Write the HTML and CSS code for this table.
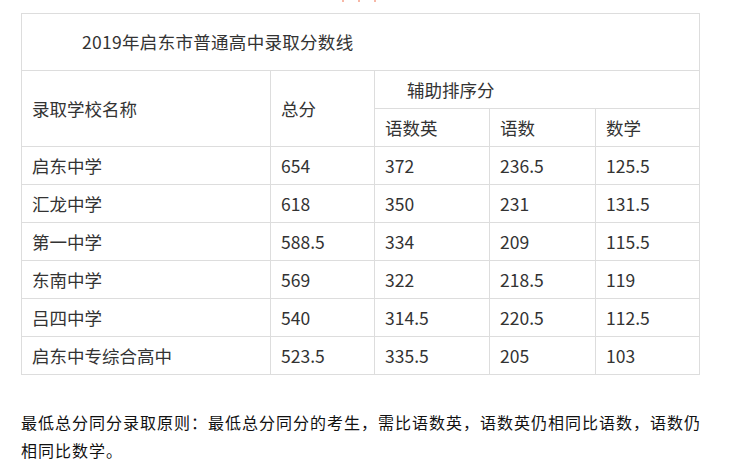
FILE: index.html
```html
<!DOCTYPE html>
<html lang="zh-CN">
<head>
<meta charset="utf-8">
<title>2019年启东市普通高中录取分数线</title>
<link rel="stylesheet" href="styles.css">
</head>
<body>
<div class="page">
  <div class="topmark"><span class="dot"></span><span class="dot"></span><span class="dot"></span></div>
  <table class="scores">
    <colgroup>
      <col class="c1"><col class="c2"><col class="c3"><col class="c4"><col class="c5">
    </colgroup>
    <tr class="title-row"><td colspan="5"><span class="title">2019年启东市普通高中录取分数线</span></td></tr>
    <tr class="hrow">
      <td rowspan="2">录取学校名称</td>
      <td rowspan="2">总分</td>
      <td colspan="3"><span class="sub">辅助排序分</span></td>
    </tr>
    <tr class="hrow">
      <td>语数英</td><td>语数</td><td>数学</td>
    </tr>
    <tr><td>启东中学</td><td>654</td><td>372</td><td>236.5</td><td>125.5</td></tr>
    <tr><td>汇龙中学</td><td>618</td><td>350</td><td>231</td><td>131.5</td></tr>
    <tr><td>第一中学</td><td>588.5</td><td>334</td><td>209</td><td>115.5</td></tr>
    <tr><td>东南中学</td><td>569</td><td>322</td><td>218.5</td><td>119</td></tr>
    <tr><td>吕四中学</td><td>540</td><td>314.5</td><td>220.5</td><td>112.5</td></tr>
    <tr><td>启东中专综合高中</td><td>523.5</td><td>335.5</td><td>205</td><td>103</td></tr>
  </table>
  <p class="note">最低总分同分录取原则：最低总分同分的考生，需比语数英，语数英仍相同比语数，语数仍相同比数学。</p>
</div>
</body>
</html>
```

FILE: styles.css
```css
html, body {
  margin: 0;
  padding: 0;
  background: #ffffff;
}
.page {
  padding-left: 21px;
  width: 683px;
  color: #333333;
  font-family: "Noto Sans CJK SC", "Noto Sans", sans-serif;
}
.topmark {
  height: 13px;
  display: flex;
  gap: 14px;
  padding-left: 321px;
  align-items: flex-start;
}
.dot {
  width: 2px;
  height: 2px;
  background: #f5a08a;
  border-radius: 1px;
}
.scores {
  width: 678px;
  border-collapse: collapse;
  table-layout: fixed;
  font-size: 17.5px;
}
.c1 { width: 249px; }
.c2 { width: 104px; }
.c3 { width: 115px; }
.c4 { width: 106px; }
.c5 { width: 104px; }
.scores td {
  border: 1px solid #dddddd;
  padding: 0 10px;
  height: 37px;
  line-height: 20px;
  vertical-align: middle;
  white-space: nowrap;
}
.scores .title-row td {
  height: 56px;
}
.title {
  padding-left: 50px;
  letter-spacing: 0.3px;
}
.sub {
  padding-left: 22px;
}
.note {
  margin: 33px 0 0 0;
  font-size: 16px;
  letter-spacing: 1px;
  line-height: 28px;
  color: #111111;
}
```
